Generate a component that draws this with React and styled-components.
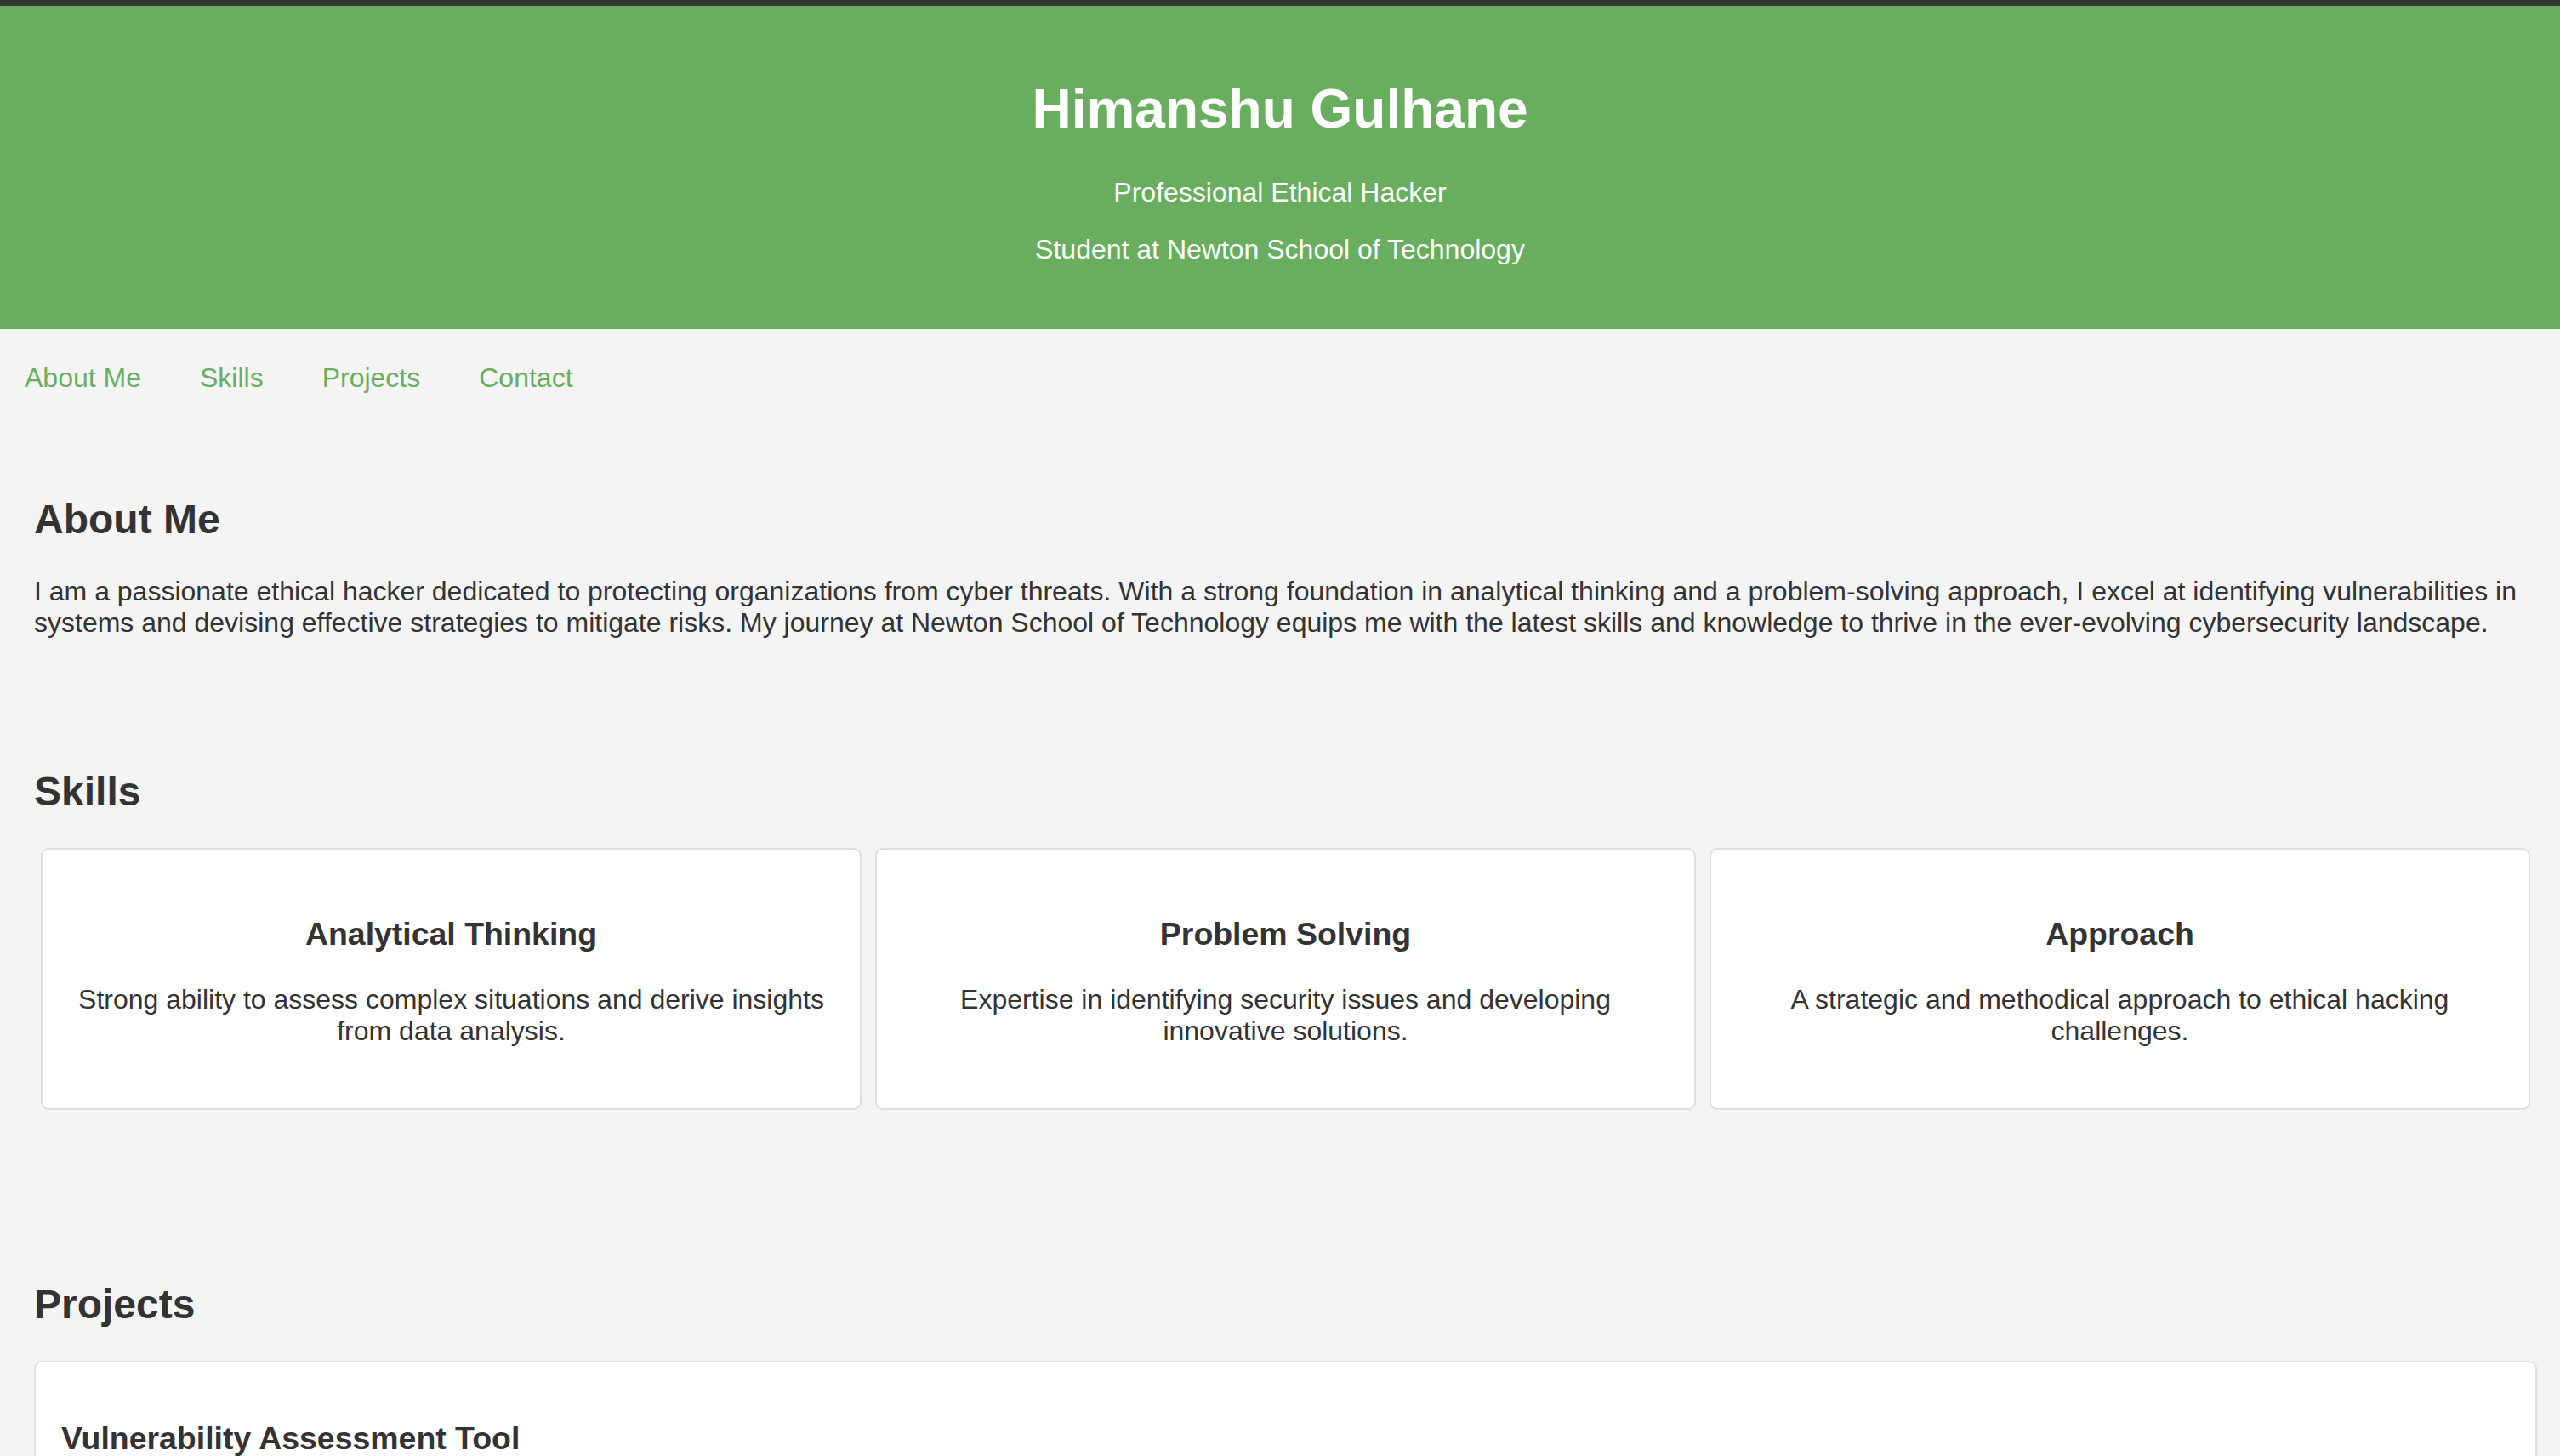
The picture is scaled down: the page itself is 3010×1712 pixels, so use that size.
import React from "react";
import styled, { createGlobalStyle } from "styled-components";

const GlobalStyle = createGlobalStyle`
  body {
    margin: 0;
    background-color: #f4f4f4;
    color: #333;
    font-family: "Liberation Sans", Arial, sans-serif;
    font-size: 32px;
  }
`;

const Header = styled.header`
  background-color: #69ae5e;
  border-top: 7px solid #2f3a31;
  color: #fff;
  text-align: center;
  padding: 84px 0 75px;
`;

const Name = styled.h1`
  margin: 0 0 43px;
  font-size: 64px;
  line-height: 74px;
  font-weight: bold;
`;

const Tagline = styled.p`
  margin: 0 0 ${props => props.$gap || 0}px;
  font-size: 32px;
  line-height: 37px;
`;

const Nav = styled.nav`
  display: flex;
  gap: 69px;
  padding: 39px 29px 40px;
`;

const NavLink = styled.a`
  color: #69ae5e;
  text-decoration: none;
  font-size: 32px;
  line-height: 37px;
  cursor: pointer;
`;

const Section = styled.section`
  padding: 40px 27px 40px 40px;
`;

const SectionTitle = styled.h2`
  margin: 40px 0 39px;
  font-size: 48px;
  line-height: 55px;
  font-weight: bold;
  color: #333;
`;

const Text = styled.p`
  margin: 0 0 32px;
  font-size: 32px;
  line-height: 37px;
`;

const SkillGrid = styled.div`
  display: grid;
  grid-template-columns: repeat(3, 1fr);
  gap: 16px;
  padding: 0 8px;
  margin: 3px 0 81px;
`;

const SkillCard = styled.div`
  background-color: #fff;
  border: 2px solid #dedede;
  border-radius: 9px;
  padding: 40px;
  text-align: center;
`;

const CardTitle = styled.h3`
  margin: 38px 0 37px;
  font-size: 37.44px;
  line-height: 43px;
  font-weight: bold;
`;

const CardText = styled.p`
  margin: 0 0 32px;
  font-size: 32px;
  line-height: 37px;
`;

const ProjectCard = styled.div`
  background-color: #fff;
  border: 2px solid #dedede;
  border-radius: 9px;
  padding: 30px;
  margin: 3px 0 32px;
`;

const ProjectTitle = styled.h3`
  margin: 38px 0 37px;
  font-size: 37.44px;
  line-height: 43px;
  font-weight: bold;
`;

const skills = [
  {
    title: "Analytical Thinking",
    text: "Strong ability to assess complex situations and derive insights from data analysis.",
  },
  {
    title: "Problem Solving",
    text: "Expertise in identifying security issues and developing innovative solutions.",
  },
  {
    title: "Approach",
    text: "A strategic and methodical approach to ethical hacking challenges.",
  },
];

const projects = [
  {
    title: "Vulnerability Assessment Tool",
    text: "Developed a tool to scan networks and applications for common vulnerabilities and generate detailed reports.",
  },
  {
    title: "Phishing Awareness Campaign",
    text: "Designed simulated phishing exercises to train users in recognizing and reporting suspicious emails.",
  },
];

const App = () => {
  return (
    <>
      <GlobalStyle />
      <Header>
        <Name>Himanshu Gulhane</Name>
        <Tagline $gap={30}>Professional Ethical Hacker</Tagline>
        <Tagline>Student at Newton School of Technology</Tagline>
      </Header>
      <Nav>
        <NavLink href="#about">About Me</NavLink>
        <NavLink href="#skills">Skills</NavLink>
        <NavLink href="#projects">Projects</NavLink>
        <NavLink href="#contact">Contact</NavLink>
      </Nav>

      <Section id="about">
        <SectionTitle>About Me</SectionTitle>
        <Text>
          I am a passionate ethical hacker dedicated to protecting organizations from cyber threats. With a
          strong foundation in analytical thinking and a problem-solving approach, I excel at identifying
          vulnerabilities in systems and devising effective strategies to mitigate risks. My journey at Newton
          School of Technology equips me with the latest skills and knowledge to thrive in the ever-evolving
          cybersecurity landscape.
        </Text>
      </Section>

      <Section id="skills">
        <SectionTitle>Skills</SectionTitle>
        <SkillGrid>
          {skills.map(skill => (
            <SkillCard key={skill.title}>
              <CardTitle>{skill.title}</CardTitle>
              <CardText>{skill.text}</CardText>
            </SkillCard>
          ))}
        </SkillGrid>
      </Section>

      <Section id="projects">
        <SectionTitle>Projects</SectionTitle>
        {projects.map(project => (
          <ProjectCard key={project.title}>
            <ProjectTitle>{project.title}</ProjectTitle>
            <Text>{project.text}</Text>
          </ProjectCard>
        ))}
      </Section>

      <Section id="contact">
        <SectionTitle>Contact</SectionTitle>
        <Text>Email: himanshu.gulhane@example.com</Text>
      </Section>
    </>
  );
};

export default App;
